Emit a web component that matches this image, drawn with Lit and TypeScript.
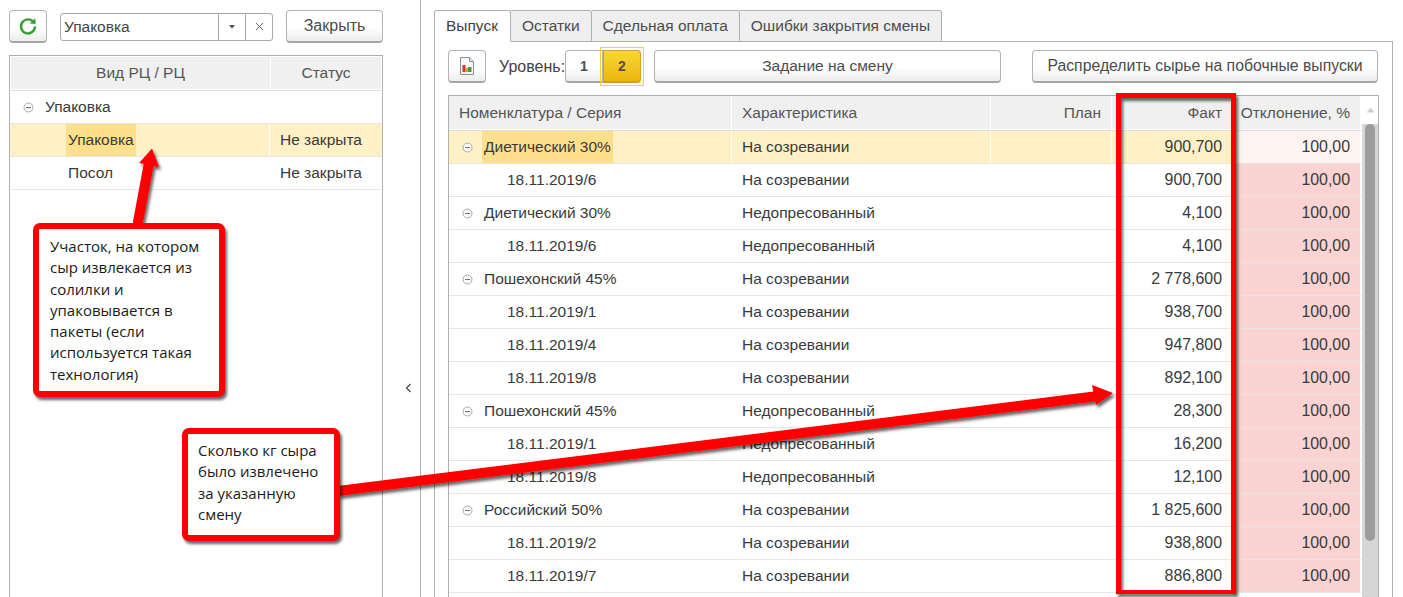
import { LitElement, html, css, svg } from 'lit';
import { customElement } from 'lit/decorators.js';

interface Row {
  name: string;
  kind: string;
  fact: string;
  group?: boolean;
  current?: boolean;
}

const ROWS: Row[] = [
  { name: 'Диетический 30%', kind: 'На созревании', fact: '900,700', group: true, current: true },
  { name: '18.11.2019/6', kind: 'На созревании', fact: '900,700' },
  { name: 'Диетический 30%', kind: 'Недопресованный', fact: '4,100', group: true },
  { name: '18.11.2019/6', kind: 'Недопресованный', fact: '4,100' },
  { name: 'Пошехонский 45%', kind: 'На созревании', fact: '2 778,600', group: true },
  { name: '18.11.2019/1', kind: 'На созревании', fact: '938,700' },
  { name: '18.11.2019/4', kind: 'На созревании', fact: '947,800' },
  { name: '18.11.2019/8', kind: 'На созревании', fact: '892,100' },
  { name: 'Пошехонский 45%', kind: 'Недопресованный', fact: '28,300', group: true },
  { name: '18.11.2019/1', kind: 'Недопресованный', fact: '16,200' },
  { name: '18.11.2019/8', kind: 'Недопресованный', fact: '12,100' },
  { name: 'Российский 50%', kind: 'На созревании', fact: '1 825,600', group: true },
  { name: '18.11.2019/2', kind: 'На созревании', fact: '938,800' },
  { name: '18.11.2019/7', kind: 'На созревании', fact: '886,800' },
];

const TABS = ['Выпуск', 'Остатки', 'Сдельная оплата', 'Ошибки закрытия смены'];

const toggle = html`<svg class="toggle" width="11" height="11" viewBox="0 0 11 11">
  <circle cx="5.5" cy="5.5" r="4.5" fill="#fafafa" stroke="#a8a8a8"></circle>
  <path d="M3 5.5h5" stroke="#777" fill="none"></path>
</svg>`;

@customElement('app-root')
export class AppRoot extends LitElement {
  static styles = css`
    :host {
      display: flex;
      position: relative;
      width: 1403px;
      height: 597px;
      overflow: hidden;
      background: #fff;
      font-family: "Liberation Sans", Arial, sans-serif;
      font-size: 15.5px;
      color: #3a3a3a;
    }

    /* left panel */
    .left {
      width: 374px;
      margin-left: 9px;
      padding-top: 10px;
      box-sizing: border-box;
      flex: none;
      display: flex;
      flex-direction: column;
    }
    .left-bar {
      display: flex;
      align-items: center;
      height: 33px;
      margin-bottom: 12px;
    }
    .btn {
      box-sizing: border-box;
      height: 33px;
      display: flex;
      align-items: center;
      justify-content: center;
      border: 1px solid #b4b4b4;
      border-bottom: 2px solid #a6a6a6;
      border-radius: 4px;
      background: linear-gradient(#ffffff 55%, #ececec);
      color: #4c4c4c;
      flex: none;
      white-space: nowrap;
    }
    .refresh { width: 38px; margin-right: 13px; }
    .close { width: 97px; margin-left: 13px; font-size: 16px; }
    .combo {
      box-sizing: border-box;
      width: 213px;
      height: 28px;
      display: flex;
      border: 1px solid #a9a9a9;
      border-radius: 3px;
      line-height: 26px;
    }
    .combo-text { flex: 1; padding-left: 3px; color: #444; }
    .combo-btn {
      width: 26px;
      border-left: 1px solid #a9a9a9;
      display: flex;
      align-items: center;
      justify-content: center;
    }
    .tree {
      flex: 1;
      border: 1px solid #b0b0b0;
      border-bottom: none;
    }
    .tree-head, .tree-row {
      display: grid;
      grid-template-columns: 259px 1fr;
      column-gap: 1px;
    }
    .tree-head {
      height: 32px;
      margin: 1px 1px 0;
      border-bottom: 1px solid #dcdcdc;
      padding-bottom: 1px;
    }
    .tree-head div {
      background: #f0f0f0;
      display: flex;
      align-items: center;
      justify-content: center;
      color: #555;
    }
    .tree-row {
      height: 32px;
      border-bottom: 1px solid #e6e6e6;
      align-items: center;
    }
    .tree-row > div { height: 100%; display: flex; align-items: center; }
    .tree-row.current > div { background: #fdf1c5; }
    .tree-status { padding-left: 10px; }
    .tree-l1 { padding-left: 13px; }
    .tree-l1 .toggle { margin-right: 11px; }
    .tree-l2 { padding-left: 56px; }
    .tree-l2.plain { padding-left: 58px; }
    .mark {
      background: #fee08c;
      align-self: stretch;
      display: flex;
      align-items: center;
      padding: 0 2px;
    }

    /* splitter */
    .split {
      width: 38px;
      flex: none;
      box-sizing: border-box;
      border-right: 1px solid #b0b0b0;
      display: flex;
      align-items: center;
      justify-content: flex-end;
      padding-right: 8px;
    }
    .split svg { margin-top: 178px; }

    /* right panel */
    .right {
      width: 959px;
      margin-left: 13px;
      padding-top: 10px;
      box-sizing: border-box;
      flex: none;
      display: flex;
      flex-direction: column;
    }
    .tabs { display: flex; height: 32px; position: relative; z-index: 1; }
    .tab {
      box-sizing: border-box;
      height: 32px;
      padding: 0 11px;
      display: flex;
      align-items: center;
      border: 1px solid #b0b0b0;
      border-left: none;
      border-radius: 0 3px 0 0;
      background: #efefef;
      color: #4c4c4c;
      white-space: nowrap;
    }
    .tab.active {
      background: #fff;
      border-left: 1px solid #b0b0b0;
      border-bottom-color: #fff;
      border-radius: 3px 3px 0 0;
      width: 77px;
      color: #3f3f3f;
    }
    .panel {
      flex: 1;
      margin-top: -1px;
      border: 1px solid #b0b0b0;
      border-bottom: none;
      padding: 8px 13px 0 13px;
      display: flex;
      flex-direction: column;
    }
    .tools { display: flex; align-items: center; height: 33px; margin-bottom: 12px; }
    .report { width: 38px; }
    .level-label { margin-left: 13px; width: 66px; flex: none; color: #444; font-size: 16px; white-space: nowrap; }
    .lvl {
      width: 38px;
      font-weight: bold;
      font-size: 14px;
      color: #4f4f4f;
      border-radius: 4px 0 0 4px;
    }
    .lvl-on {
      position: relative;
      border-radius: 0 4px 4px 0;
      background: linear-gradient(#fbd634, #eab710);
      border-color: #c9a227;
      margin-right: 13px;
    }
    .lvl-on::after {
      content: "";
      position: absolute;
      inset: -4px -4px -5px -4px;
      border: 1px solid #f7cf3a;
    }
    .task { width: 347px; }
    .spread { width: 346px; margin-left: 31px; font-size: 15.8px; }

    .grid {
      flex: 1;
      border: 1px solid #b0b0b0;
      border-bottom: none;
      position: relative;
      display: grid;
      grid-template-columns: 1fr 17px;
    }
    .g-head, .g-row {
      display: grid;
      grid-template-columns: 282px 258px 120px 120px 127px;
      column-gap: 1px;
    }
    .g-head {
      height: 33px;
      border-bottom: 1px solid #dcdcdc;
      padding-bottom: 1px;
    }
    .g-head div {
      background: #f0f0f0;
      display: flex;
      align-items: center;
      padding: 0 10px;
      color: #555;
      white-space: nowrap;
    }
    .g-head .num, .g-row .num { justify-content: flex-end; }
    .g-row { height: 32px; border-bottom: 1px solid #e6e6e6; }
    .g-row > div {
      display: flex;
      align-items: center;
      padding: 0 10px;
      white-space: nowrap;
    }
    .g-row .num { font-size: 15.9px; }
    .g-row .dev { background: #fbd3d2; }
    .g-row.current > div { background: #fdf1c5; }
    .g-row.current .dev { background: #fef3f1; }
    .g-row .name-group { padding-left: 13px; }
    .g-row .name-group .toggle { margin-right: 9px; }
    .plain-name { padding: 0 2px; }
    .g-row .name-leaf { padding-left: 58px; }
    .scroll {
      background: #d6d6d6;
      border-left: 1px solid #fff;
      display: flex;
      flex-direction: column;
      align-items: center;
    }
    .scroll-arrow {
      background: #fff;
      height: 28px;
      width: 100%;
      display: flex;
      align-items: center;
      justify-content: center;
      flex: none;
    }
    .thumb { width: 10px; height: 417px; background: #9c9c9c; border-radius: 5px; flex: none; }

    /* annotations */
    .overlay { position: absolute; left: 0; top: 0; pointer-events: none; }
    .note {
      position: absolute;
      box-sizing: border-box;
      background: #fff;
      border: 6px solid #f00;
      border-radius: 7px;
      box-shadow: 2px 3px 3px rgba(0, 0, 0, 0.6);
      font-family: "Open Sans", "Noto Sans", sans-serif;
      font-size: 15px;
      line-height: 21.3px;
      color: #1a1a1a;
      white-space: pre-line;
    }
    .note-a { left: 33px; top: 223px; width: 192px; height: 174px; padding: 7px 0 0 11px; }
    .note-b { left: 182px; top: 428px; width: 158px; height: 113px; padding: 6px 0 0 10px; }
  `;

  renderLeft() {
    return html`
      <section class="left">
        <div class="left-bar">
          <div class="btn refresh">
            <svg width="20" height="20" viewBox="0 0 20 20">
              <path d="M15.6 6.2A7 7 0 1 0 17 10.5" fill="none" stroke="#35a030" stroke-width="2.4"></path>
              <path d="M11.8 7.6 17.6 8 17.4 2.2Z" fill="#35a030"></path>
            </svg>
          </div>
          <div class="combo">
            <div class="combo-text">Упаковка</div>
            <div class="combo-btn">
              <svg width="8" height="5"><path d="M1 1h6L4 4.5Z" fill="#555"></path></svg>
            </div>
            <div class="combo-btn">
              <svg width="9" height="9"><path d="M1 1l7 7M8 1l-7 7" stroke="#666" fill="none"></path></svg>
            </div>
          </div>
          <div class="btn close">Закрыть</div>
        </div>
        <div class="tree">
          <div class="tree-head"><div>Вид РЦ / РЦ</div><div>Статус</div></div>
          <div class="tree-row">
            <div class="tree-l1">${toggle}Упаковка</div><div></div>
          </div>
          <div class="tree-row current">
            <div class="tree-l2"><span class="mark">Упаковка</span></div>
            <div class="tree-status">Не закрыта</div>
          </div>
          <div class="tree-row">
            <div class="tree-l2 plain">Посол</div>
            <div class="tree-status">Не закрыта</div>
          </div>
        </div>
      </section>
    `;
  }

  renderGridRow(row: Row) {
    return html`
      <div class="g-row ${row.current ? 'current' : ''}">
        ${row.group
          ? html`<div class="name-group">${toggle}<span class="${row.current ? 'mark' : 'plain-name'}">${row.name}</span></div>`
          : html`<div class="name-leaf">${row.name}</div>`}
        <div>${row.kind}</div>
        <div></div>
        <div class="num">${row.fact}</div>
        <div class="num dev">100,00</div>
      </div>
    `;
  }

  renderRight() {
    return html`
      <section class="right">
        <div class="tabs">
          ${TABS.map((t, i) => html`<div class="tab ${i === 0 ? 'active' : ''}">${t}</div>`)}
        </div>
        <div class="panel">
          <div class="tools">
            <div class="btn report">
              <svg width="16" height="20" viewBox="0 0 16 20">
                <path d="M1.5 1.5h9l4 4v13h-13Z" fill="#f6f7f8" stroke="#8a8f96"></path>
                <path d="M10.5 1.5v4h4" fill="#e4e6e8" stroke="#8a8f96"></path>
                <rect x="3.5" y="9" width="3" height="7" fill="#d8342a"></rect>
                <rect x="6.5" y="12" width="2.5" height="4" fill="#e8a020"></rect>
                <rect x="9" y="11" width="3.5" height="5" fill="#3f9a38"></rect>
              </svg>
            </div>
            <div class="level-label">Уровень:</div>
            <div class="btn lvl">1</div>
            <div class="btn lvl lvl-on">2</div>
            <div class="btn task">Задание на смену</div>
            <div class="btn spread">Распределить сырье на побочные выпуски</div>
          </div>
          <div class="grid">
            <div>
              <div class="g-head">
                <div>Номенклатура / Серия</div>
                <div>Характеристика</div>
                <div class="num">План</div>
                <div class="num">Факт</div>
                <div class="num">Отклонение, %</div>
              </div>
              ${ROWS.map((r) => this.renderGridRow(r))}
            </div>
            <div class="scroll">
              <div class="scroll-arrow">
                <svg width="9" height="6"><path d="M4.5 0.5 8.5 5.5h-8Z" fill="#cfcfcf"></path></svg>
              </div>
              <div class="thumb"></div>
            </div>
          </div>
        </div>
      </section>
    `;
  }

  renderOverlay() {
    return svg`
      <defs>
        <filter id="sh" filterUnits="userSpaceOnUse" x="0" y="0" width="1403" height="597">
          <feDropShadow dx="2" dy="3" stdDeviation="1.6" flood-color="#000" flood-opacity="0.6"></feDropShadow>
        </filter>
      </defs>
      <g filter="url(#sh)" fill="#f00">
        <path d="M138 222 149 163" stroke="#f00" stroke-width="10" stroke-linecap="round" fill="none"></path>
        <path d="M152 148.500 139 163 159 167Z"></path>
        <path d="M338 491 1098 396" stroke="#f00" stroke-width="10" fill="none"></path>
        <path d="M1113 393 1092 385 1096 405Z"></path>
        <path fill-rule="evenodd" d="M1116 93h120v501h-120ZM1121 98v492h110V98Z"></path>
      </g>
    `;
  }

  render() {
    return html`
      ${this.renderLeft()}
      <div class="split">
        <svg width="7" height="10"><path d="M5.500 1 1.500 5l4 4" stroke="#444" stroke-width="1.200" fill="none"></path></svg>
      </div>
      ${this.renderRight()}
      <svg class="overlay" width="1403" height="597">${this.renderOverlay()}</svg>
      <div class="note note-a">Участок, на котором
сыр извлекается из
солилки и
упаковывается в
пакеты (если
используется такая
технология)</div>
      <div class="note note-b">Сколько кг сыра
было извлечено
за указанную
смену</div>
    `;
  }
}
